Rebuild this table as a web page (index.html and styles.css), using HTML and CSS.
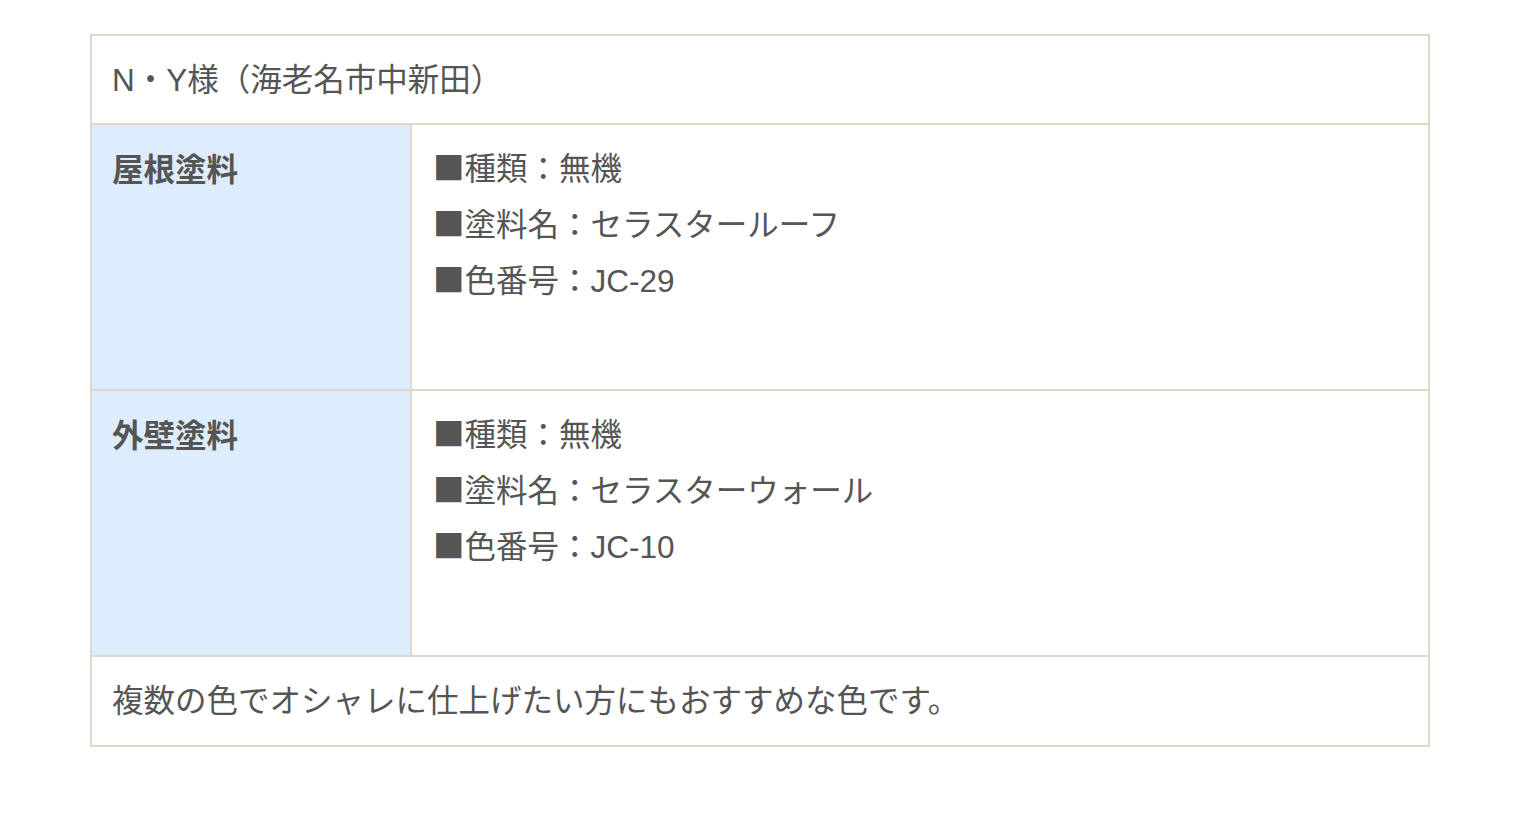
FILE: index.html
```html
<!DOCTYPE html>
<html lang="ja">
<head>
<meta charset="utf-8">
<link rel="stylesheet" href="styles.css">
</head>
<body>
<table class="case">
  <tr>
    <th class="title" colspan="2"><span class="lat">N</span>・<span class="lat">Y</span>様（海老名市中新田）</th>
  </tr>
  <tr>
    <th class="label">屋根塗料</th>
    <td class="spec">■種類：無機<br>■塗料名：セラスタールーフ<br>■色番号：<span class="lat">JC-29</span></td>
  </tr>
  <tr>
    <th class="label">外壁塗料</th>
    <td class="spec">■種類：無機<br>■塗料名：セラスターウォール<br>■色番号：<span class="lat">JC-10</span></td>
  </tr>
  <tr>
    <td class="note" colspan="2">複数の色でオシャレに仕上げたい方にもおすすめな色です。</td>
  </tr>
</table>
</body>
</html>
```
FILE: styles.css
```css
html, body {
  margin: 0;
  padding: 0;
  background: #fff;
}
body {
  padding: 34px 90px;
  font-family: "Noto Sans CJK JP", "Liberation Sans", sans-serif;
  color: #555;
  font-size: 31.5px;
  line-height: 56px;
}
.lat {
  font-family: "Liberation Sans", "Noto Sans CJK JP", sans-serif;
  line-height: 1;
}
.case {
  width: 1340px;
  border-collapse: collapse;
  border: 2px solid #e0d8c9;
}
.case th, .case td {
  border: 2px solid #e0d8c9;
  text-align: left;
  vertical-align: top;
  font-weight: normal;
}
.title {
  padding: 13px 20px 18px;
  height: 56px;
}
.label {
  width: 278px;
  background: #deedfd;
  font-weight: bold !important;
  padding: 14px 20px 16px;
  height: 234px;
}
.spec {
  padding: 13px 21px 17px;
}
.note {
  padding: 13px 20px 19px;
}
```
